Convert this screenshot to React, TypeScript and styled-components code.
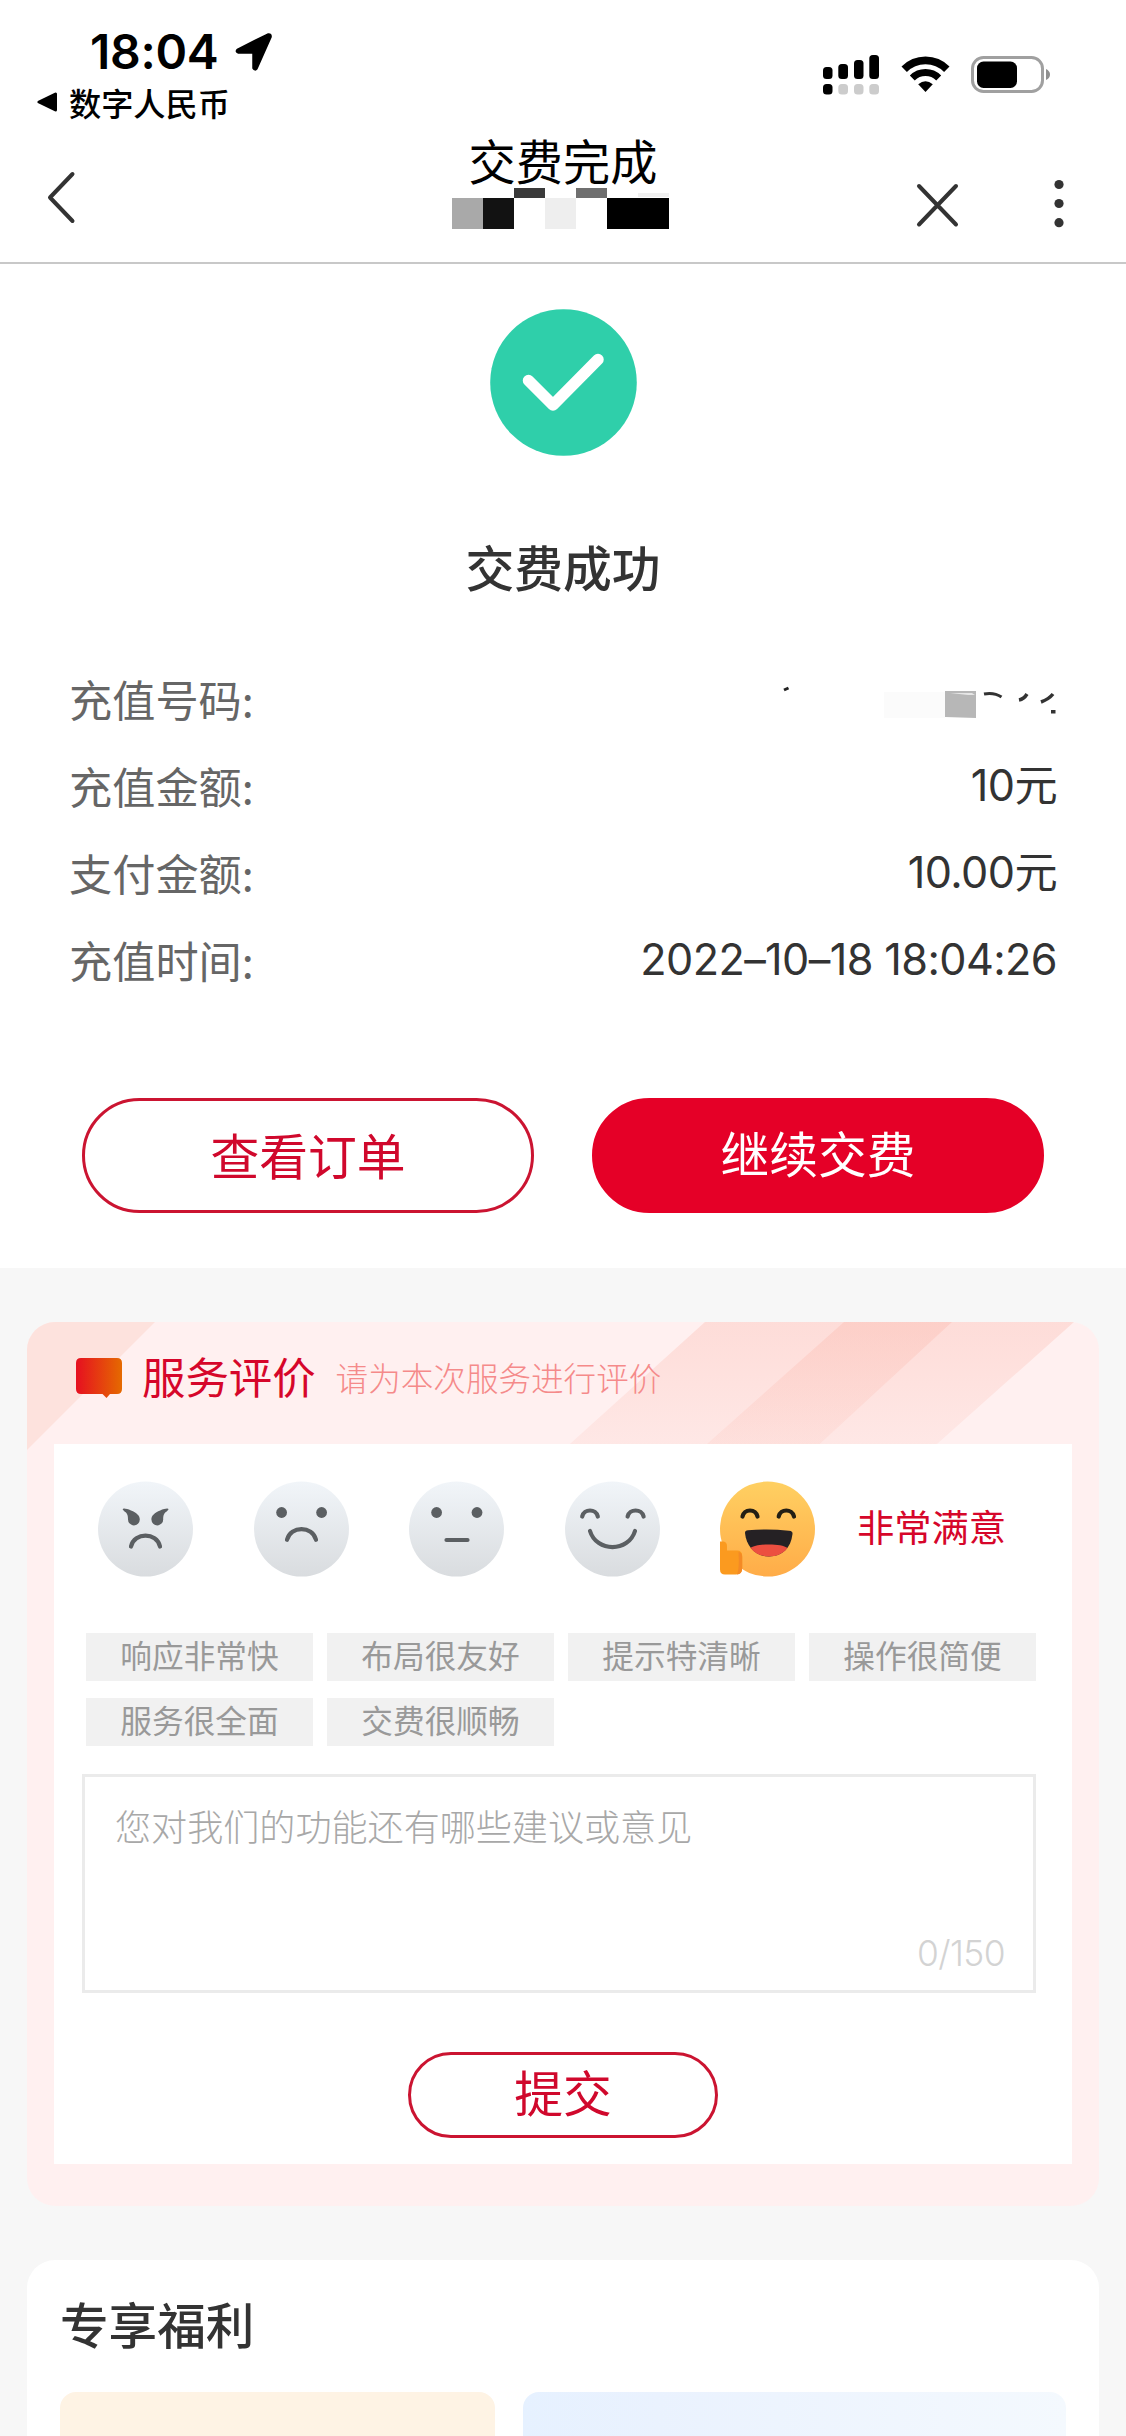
import React from "react";
import styled, { createGlobalStyle } from "styled-components";

const GlobalStyle = createGlobalStyle`
  *, *::before, *::after { box-sizing: border-box; }
  html, body { margin: 0; padding: 0; background: #fff; }
  body { font-family: Inter, "Noto Sans CJK SC", sans-serif; }
  svg { display: block; flex: none; }
  button { font-family: inherit; padding: 0; cursor: pointer; }
`;

const Screen = styled.div`
  width: 1126px;
  height: 2436px;
  overflow: hidden;
  display: flex;
  flex-direction: column;
  background: #f7f7f7;
`;

/* ---------- status bar ---------- */

const StatusBar = styled.header`
  height: 126px;
  flex: none;
  display: flex;
  justify-content: space-between;
  padding: 27px 75px 0 37px;
  background: #fff;
`;

const StatusLeft = styled.div`
  display: flex;
  flex-direction: column;
`;

const ClockRow = styled.div`
  display: flex;
  align-items: center;
  gap: 15px;
  height: 50px;
  padding-left: 53px;
`;

const Clock = styled.span`
  width: 130px;
  font-size: 48px;
  font-weight: 600;
  line-height: 50px;
  letter-spacing: -0.3px;
  color: #000;
  white-space: nowrap;
`;

const ReturnLink = styled.div`
  display: flex;
  align-items: center;
  gap: 11px;
  height: 60px;
  font-size: 32.2px;
  font-weight: 500;
  color: #000;
`;

const StatusRight = styled.div`
  display: flex;
  align-items: flex-start;
  padding-top: 28px;
`;

const SignalIcon = styled.svg`
  margin-right: 21px;
`;

const WifiIcon = styled.svg`
  margin-right: 21px;
`;

/* ---------- navigation ---------- */

const NavBar = styled.nav`
  height: 138px;
  flex: none;
  display: grid;
  grid-template-columns: 400px 1fr 400px;
  background: #fff;
  border-bottom: 2px solid #c8c8c8;
`;

const NavLeft = styled.div`
  padding: 44px 0 0 46px;
`;

const NavCenter = styled.div`
  display: flex;
  flex-direction: column;
  align-items: center;
`;

const NavTitle = styled.h1`
  margin: 0;
  height: 62px;
  font-size: 47.2px;
  font-weight: 400;
  line-height: 74px;
  color: #000;
  white-space: nowrap;
`;

const Mosaic = styled.div`
  display: grid;
  grid-template-columns: repeat(7, 31px);
  grid-template-rows: 10px 31px;
  margin-right: 6px;
`;

const Pixel = styled.i<{ $tone: string; $inset?: boolean }>`
  background: ${(p) => p.$tone};
  margin: ${(p) => (p.$inset ? "5px 0 1px" : "0")};
`;

const NavRight = styled.div`
  display: flex;
  justify-content: flex-end;
  gap: 94px;
  padding: 52px 62px 0 0;
`;

/* ---------- payment result ---------- */

const Result = styled.main`
  height: 1004px;
  flex: none;
  display: flex;
  flex-direction: column;
  align-items: center;
  padding-top: 45px;
  background: #fff;
`;

const ResultTitle = styled.h2`
  margin: 79px 0 0;
  font-size: 48.8px;
  font-weight: 500;
  line-height: 70px;
  color: #333;
`;

const Details = styled.dl`
  width: 100%;
  margin: 49px 0 0;
  padding: 0 69px;
`;

const DetailRow = styled.div`
  display: flex;
  justify-content: space-between;
  align-items: center;
  height: 87px;
`;

const DetailLabel = styled.dt`
  font-family: "Noto Sans CJK SC", sans-serif;
  font-size: 43.2px;
  line-height: 60px;
  color: #666;
`;

const DetailValue = styled.dd<{ $spacing?: number }>`
  margin: 0;
  font-size: 43.2px;
  line-height: 60px;
  letter-spacing: ${(p) => p.$spacing ?? 0}px;
  color: #333;
  white-space: nowrap;
`;

const Actions = styled.div`
  display: flex;
  gap: 58px;
  margin-top: 96px;
`;

const PillButton = styled.button<{ $filled?: boolean; $small?: boolean }>`
  width: ${(p) => (p.$small ? 310 : 452)}px;
  height: ${(p) => (p.$small ? 86 : 115)}px;
  padding-top: ${(p) => (p.$filled || p.$small ? 0 : 5)}px;
  border: 3px solid ${(p) => (p.$filled ? "#e50027" : "#cb1431")};
  border-radius: 58px;
  background: ${(p) => (p.$filled ? "#e50027" : "#fff")};
  color: ${(p) => (p.$filled ? "#fff" : "#d0082c")};
  font-size: 48.8px;
  line-height: 60px;
`;

/* ---------- service rating ---------- */

const RatingCard = styled.section`
  position: relative;
  width: 1072px;
  height: 884px;
  flex: none;
  margin: 54px 27px 0;
  border-radius: 28px;
  overflow: hidden;
  background: #fff0f0;
`;

const CardArt = styled.svg`
  position: absolute;
  inset: 0 auto auto 0;
`;

const RatingHeader = styled.div`
  position: relative;
  height: 122px;
  display: flex;
  align-items: center;
  padding: 0 0 10px 49px;
`;

const RatingTitle = styled.h3`
  margin: 0 0 0 20px;
  font-size: 43.4px;
  font-weight: 400;
  line-height: 60px;
  color: #d6062a;
`;

const RatingHint = styled.span`
  margin: 2px 0 0 20px;
  font-size: 32.6px;
  line-height: 50px;
  font-weight: 300;
  color: #f58a8a;
`;

const RatingPanel = styled.div`
  position: relative;
  width: 1018px;
  height: 720px;
  margin-left: 27px;
  padding: 37px 36px 0 28px;
  background: #fff;
`;

const Faces = styled.div`
  display: flex;
  align-items: center;
  gap: 60.6px;
  padding-left: 16px;
`;

const FaceLabel = styled.span`
  margin-left: -19px;
  font-size: 37.3px;
  line-height: 56px;
  color: #d6062a;
  white-space: nowrap;
`;

const Tags = styled.div`
  display: grid;
  grid-template-columns: repeat(4, 227px);
  gap: 17px 14px;
  margin: 56px 0 0 4px;
`;

const Tag = styled.span`
  height: 48px;
  font-size: 31.7px;
  line-height: 47px;
  text-align: center;
  color: #999;
  background: #f1f1f1;
`;

const Comment = styled.div`
  display: flex;
  flex-direction: column;
  justify-content: space-between;
  height: 219px;
  margin-top: 28px;
  padding: 26px 28px 11px 30px;
  border: 3px solid #ebebeb;
`;

const Placeholder = styled.span`
  font-size: 36.1px;
  line-height: 50px;
  font-weight: 300;
  color: #a8a8a8;
`;

const Counter = styled.span`
  align-self: flex-end;
  font-size: 35.4px;
  line-height: 50px;
  font-weight: 300;
  letter-spacing: -0.6px;
  color: #d3d3d3;
`;

const SubmitRow = styled.div`
  display: flex;
  justify-content: center;
  margin: 59px 0 0 8px;
`;

/* ---------- benefits ---------- */

const Benefits = styled.section`
  width: 1072px;
  flex: 1;
  margin: 54px 27px 0;
  padding: 31px 33px 0;
  border-radius: 28px 28px 0 0;
  background: #fff;
`;

const BenefitsTitle = styled.h3`
  margin: 0;
  font-size: 48.6px;
  font-weight: 500;
  line-height: 72px;
  color: #333;
`;

const BenefitGrid = styled.div`
  display: grid;
  grid-template-columns: 435px 543px;
  gap: 28px;
  margin-top: 29px;
`;

const BenefitTile = styled.div<{ $fill: string }>`
  height: 60px;
  border-radius: 16px 16px 0 0;
  background: ${(p) => p.$fill};
`;

/* ---------- data ---------- */

const CLEAR = "transparent";
const mosaicTop = [CLEAR, CLEAR, "#3a3a3a", CLEAR, "#6f6f6f", CLEAR, "#f0f0f0"];
const mosaicBottom = ["#a9a9a9", "#121212", CLEAR, "#eee", CLEAR, "#000", "#000"];

const details = [
  { label: "充值金额:", value: "10元", spacing: -0.6 },
  { label: "支付金额:", value: "10.00元", spacing: -0.6 },
  { label: "充值时间:", value: "2022–10–18 18:04:26", spacing: -0.6 },
];

const tags = ["响应非常快", "布局很友好", "提示特清晰", "操作很简便", "服务很全面", "交费很顺畅"];

type Mood = "angry" | "sad" | "neutral" | "smile" | "laugh";
const moods: Mood[] = ["angry", "sad", "neutral", "smile", "laugh"];

const INK = "#5b5f62";

function FaceFeatures({ mood }: { mood: Mood }) {
  const line = { fill: "none", stroke: INK, strokeWidth: 4.2, strokeLinecap: "round" as const };
  switch (mood) {
    case "angry":
      return (
        <>
          <path d="M24.6 28.2C25 27 29 27.800 33 29.400C38.500 31.600 42 34.500 41.800 38.600A5.900 5.900 0 0 1 30 38.400C30 34.800 29.500 32 26.200 30.200Z" fill={INK} />
          <path d="M70.600 28.200C70.200 27 66.200 27.800 62.200 29.400C56.700 31.600 53.200 34.500 53.400 38.600A5.900 5.900 0 0 0 65.200 38.400C65.200 34.800 65.700 32 69 30.200Z" fill={INK} />
          <path d="M33 65.500C36.500 51 58.500 51 62 65.500" {...line} />
        </>
      );
    case "sad":
      return (
        <>
          <circle cx="27.600" cy="31.500" r="5.400" fill={INK} />
          <circle cx="67.600" cy="31.500" r="5.400" fill={INK} />
          <path d="M33 58.800C36.500 44.500 58.500 44.500 62 58.800" {...line} />
        </>
      );
    case "neutral":
      return (
        <>
          <circle cx="27.600" cy="31.500" r="5.400" fill={INK} />
          <circle cx="68" cy="31.500" r="5.400" fill={INK} />
          <path d="M37.500 59H58.500" {...line} />
        </>
      );
    case "smile":
      return (
        <>
          <path d="M17.200 35.500C19 27.500 31 27.500 32.800 35.500" {...line} />
          <path d="M62.600 35.500C64.400 27.500 76.800 27.500 78.600 35.500" {...line} />
          <path d="M25 50C31.500 71.500 63.500 71.500 70 50" {...line} />
        </>
      );
    case "laugh":
      return (
        <>
          <path d="M22.500 35.500C24.500 27.500 35.500 27.500 37.500 35.500" {...line} stroke="#231f14" />
          <path d="M58.700 35.500C60.500 27.500 72 27.500 74 35.500" {...line} stroke="#231f14" />
          <path d="M25 52C25 50 26 49.600 28 49.300C41 48.200 55 48.200 69 49.800C72 50.200 72.600 51 72.500 53C71 67 62 75.500 49 75.500C36 75.500 26.500 66 25 52Z" fill="#252124" />
          <path d="M30.500 67C36 62.500 61 62 67.500 67C63 72.500 57 75.500 49 75.500C41 75.500 35 72.500 30.500 67Z" fill="#ec4f40" />
          <path d="M0 60.500H3.500Q7 61 7 65V69.500H17Q22.200 69.500 22.200 75V87Q22.200 93.500 16 93.500H5Q0 93.500 0 88.500Z" fill="#fb9a1f" />
          <path d="M18.500 71Q22.200 71.500 22.200 76V87Q22.200 93 17 93.500Q19.500 88 18.500 71Z" fill="#f48a25" />
        </>
      );
  }
}

function Face({ mood }: { mood: Mood }) {
  const happy = mood === "laugh";
  return (
    <svg width="95" height="96" viewBox="0 0 95 96" role="img" aria-label={mood}>
      <defs>
        <linearGradient id={`face-${mood}`} x1="0" y1="0" x2="0" y2="1">
          <stop offset="0" stopColor={happy ? "#ffd062" : "#f1f5f9"} />
          <stop offset="1" stopColor={happy ? "#ffac48" : "#d9dcdf"} />
        </linearGradient>
      </defs>
      <circle cx="47.500" cy="48" r="47.500" fill={`url(#face-${mood})`} />
      <FaceFeatures mood={mood} />
    </svg>
  );
}

function MaskedNumber() {
  return (
    <svg width="276" height="44" viewBox="0 0 276 44" aria-hidden="true">
      <path d="M3 14L7.500 12" stroke="#222" strokeWidth="3" />
      <path d="M103 16H164V42H103Z" fill="#fbfbfb" />
      <path d="M164 15H195V42L164 41Z" fill="#b7b7b7" />
      <path d="M169 17H191L194 19L187 19Z" fill="#e6e6e6" />
      <path d="M203 18Q213 16 220.500 21" stroke="#333" strokeWidth="3" fill="none" />
      <path d="M238 24Q243 23 246 18" stroke="#333" strokeWidth="3.500" fill="none" />
      <path d="M260 26Q268 23 272 18" stroke="#333" strokeWidth="3.500" fill="none" />
      <path d="M270 34H274.500V37.500H270Z" fill="#333" />
    </svg>
  );
}

export default function App() {
  return (
    <>
      <GlobalStyle />
      <Screen>
        <StatusBar>
          <StatusLeft>
            <ClockRow>
              <Clock>18:04</Clock>
              <svg width="38" height="40" viewBox="0 0 38 40">
                <path d="M3 17.500L33 2.500Q36 2 35.500 5L21.500 36.500Q20 38.500 18.500 36V20.500H3.500Q0.500 19.500 3 17.500Z" fill="#000" stroke="#000" strokeWidth="2.500" strokeLinejoin="round" />
              </svg>
            </ClockRow>
            <ReturnLink>
              <svg width="21" height="20" viewBox="0 0 21 20">
                <path d="M2 10L18.500 2V18Z" fill="#000" stroke="#000" strokeWidth="3" strokeLinejoin="round" />
              </svg>
              数字人民币
            </ReturnLink>
          </StatusLeft>
          <StatusRight>
            <SignalIcon width="57" height="40" viewBox="0 0 57 40">
              <rect x="0" y="12" width="9.500" height="12" rx="3.500" />
              <rect x="15.300" y="9" width="9.700" height="15" rx="3.500" />
              <rect x="31" y="5" width="9.500" height="19" rx="3.500" />
              <rect x="46.300" y="0" width="9.700" height="24" rx="3.500" />
              <rect x="0" y="29" width="9.500" height="10.500" rx="3.500" />
              <rect x="15.300" y="29" width="9.700" height="10.500" rx="3.500" fill="#ccc" />
              <rect x="31" y="29" width="9.500" height="10.500" rx="3.500" fill="#ccc" />
              <rect x="46.300" y="29" width="9.700" height="10.500" rx="3.500" fill="#ccc" />
            </SignalIcon>
            <WifiIcon width="49" height="38" viewBox="0 0 49 38">
              <path d="M3.200 14.200A30 30 0 0 1 45.800 14.200" fill="none" stroke="#000" strokeWidth="7.600" />
              <path d="M11.300 23A18.800 18.800 0 0 1 37.700 23" fill="none" stroke="#000" strokeWidth="7" />
              <path d="M17.200 29.300Q24.500 23 31.800 29.300L24.500 37Z" fill="#000" />
            </WifiIcon>
            <svg width="80" height="40" viewBox="0 0 80 40">
              <rect x="1.500" y="2.500" width="70" height="34" rx="11" fill="none" stroke="#a0a0a0" strokeWidth="3" />
              <rect x="6" y="6.500" width="40" height="26.500" rx="6.500" />
              <path d="M75 14Q79 16 79 19.500T75 25Z" fill="#8f8f8f" />
            </svg>
          </StatusRight>
        </StatusBar>

        <NavBar>
          <NavLeft>
            <svg width="32" height="56" viewBox="0 0 32 56">
              <path d="M26.500 4L4 27.500L26.500 51" fill="none" stroke="#333" strokeWidth="4" strokeLinecap="round" strokeLinejoin="round" />
            </svg>
          </NavLeft>
          <NavCenter>
            <NavTitle>交费完成</NavTitle>
            <Mosaic>
              {mosaicTop.map((tone, i) => (
                <Pixel key={i} $tone={tone} $inset={i === 6} />
              ))}
              {mosaicBottom.map((tone, i) => (
                <Pixel key={i} $tone={tone} />
              ))}
            </Mosaic>
          </NavCenter>
          <NavRight>
            <svg width="46" height="54" viewBox="0 0 46 54">
              <path d="M5 8L42 46.500M42 8L5 46.500" fill="none" stroke="#333" strokeWidth="4" strokeLinecap="round" />
            </svg>
            <svg width="10" height="54" viewBox="0 0 10 54">
              <circle cx="5" cy="6.500" r="4.600" fill="#333" />
              <circle cx="5" cy="25.500" r="4.600" fill="#333" />
              <circle cx="5" cy="44.700" r="4.600" fill="#333" />
            </svg>
          </NavRight>
        </NavBar>

        <Result>
          <svg width="147" height="147" viewBox="0 0 147 147">
            <circle cx="73.500" cy="73.500" r="73.300" fill="#2fcfaa" />
            <path d="M38.500 71.500L63 96L108 50.500" fill="none" stroke="#fff" strokeWidth="11.500" strokeLinecap="round" strokeLinejoin="round" />
          </svg>
          <ResultTitle>交费成功</ResultTitle>
          <Details>
            <DetailRow>
              <DetailLabel>充值号码:</DetailLabel>
              <DetailValue>
                <MaskedNumber />
              </DetailValue>
            </DetailRow>
            {details.map((d) => (
              <DetailRow key={d.label}>
                <DetailLabel>{d.label}</DetailLabel>
                <DetailValue $spacing={d.spacing}>{d.value}</DetailValue>
              </DetailRow>
            ))}
          </Details>
          <Actions>
            <PillButton>查看订单</PillButton>
            <PillButton $filled>继续交费</PillButton>
          </Actions>
        </Result>

        <RatingCard>
          <CardArt width="1072" height="130" viewBox="0 0 1072 130">
            <defs>
              <linearGradient id="stripe" x1="0" y1="0" x2="0" y2="1">
                <stop offset="0" stopColor="#fbb3a6" stopOpacity="0.320" />
                <stop offset="1" stopColor="#fbb3a6" stopOpacity="0.130" />
              </linearGradient>
            </defs>
            <path d="M0 0H128L0 128Z" fill="#fde2dd" />
            <path d="M678 0H925L784 130H534Z" fill="url(#stripe)" />
            <path d="M817 0H1047L901 130H671Z" fill="url(#stripe)" />
          </CardArt>
          <RatingHeader>
            <svg width="46" height="42" viewBox="0 0 46 42">
              <defs>
                <linearGradient id="bubble" x1="0" y1="0" x2="1" y2="0">
                  <stop offset="0" stopColor="#e60f20" />
                  <stop offset="1" stopColor="#e56a00" />
                </linearGradient>
              </defs>
              <path d="M5 1H41Q46 1 46 6V32Q46 37 41 37H34L30.500 41L26.500 37H5Q0 37 0 32V6Q0 1 5 1Z" fill="url(#bubble)" />
            </svg>
            <RatingTitle>服务评价</RatingTitle>
            <RatingHint>请为本次服务进行评价</RatingHint>
          </RatingHeader>
          <RatingPanel>
            <Faces>
              {moods.map((m) => (
                <Face key={m} mood={m} />
              ))}
              <FaceLabel>非常满意</FaceLabel>
            </Faces>
            <Tags>
              {tags.map((t) => (
                <Tag key={t}>{t}</Tag>
              ))}
            </Tags>
            <Comment>
              <Placeholder>您对我们的功能还有哪些建议或意见</Placeholder>
              <Counter>0/150</Counter>
            </Comment>
            <SubmitRow>
              <PillButton $small>提交</PillButton>
            </SubmitRow>
          </RatingPanel>
        </RatingCard>

        <Benefits>
          <BenefitsTitle>专享福利</BenefitsTitle>
          <BenefitGrid>
            <BenefitTile $fill="#fef3e4" />
            <BenefitTile $fill="linear-gradient(90deg, #e6f1ff, #eaf2fe 25%, #f4f9fe)" />
          </BenefitGrid>
        </Benefits>
      </Screen>
    </>
  );
}
